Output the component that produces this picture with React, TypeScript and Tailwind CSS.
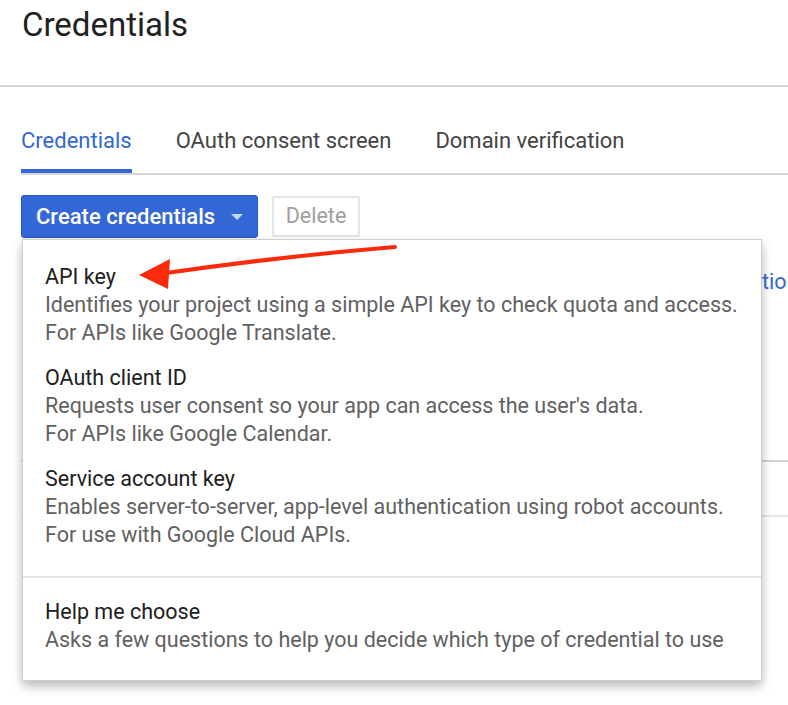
import React from 'react'

interface Option {
  title: string
  lines: string[]
}

const OPTIONS: Option[] = [
  {
    title: 'API key',
    lines: [
      'Identifies your project using a simple API key to check quota and access.',
      'For APIs like Google Translate.',
    ],
  },
  {
    title: 'OAuth client ID',
    lines: [
      "Requests user consent so your app can access the user's data.",
      'For APIs like Google Calendar.',
    ],
  },
  {
    title: 'Service account key',
    lines: [
      'Enables server-to-server, app-level authentication using robot accounts.',
      'For use with Google Cloud APIs.',
    ],
  },
]

const TABS = ['Credentials', 'OAuth consent screen', 'Domain verification']

export default function App() {
  return (
    <div
      className="relative h-[705px] w-[788px] overflow-hidden bg-white"
      style={{ fontFamily: 'Roboto, "Liberation Sans", sans-serif' }}
    >
      {/* page title */}
      <header className="h-[87px] border-b-2 border-[#d6d6d6] px-[22px] pt-[7px]">
        <h1 className="text-[33px] leading-[36px] text-[#212121]">Credentials</h1>
      </header>

      {/* tabs */}
      <nav className="ml-[21px] flex gap-[44px] border-b-2 border-[#d6d6d6] pt-[40px]">
        {TABS.map((t, i) => (
          <div
            key={t}
            className={
              i === 0
                ? 'border-b-4 border-[#3367d6] pb-[14px] text-[22px] leading-[28px] text-[#3367d6]'
                : 'border-b-4 border-transparent pb-[14px] text-[22px] leading-[28px] text-[#444]'
            }
          >
            {t}
          </div>
        ))}
      </nav>

      {/* toolbar + dropdown */}
      <div className="relative ml-[21px] mt-[20px]">
        <div className="flex items-center gap-[14px]">
          <button className="flex h-[43px] w-[237px] items-center gap-[16px] rounded-[3px] border border-[#2a56c6] bg-[#3367d6] pl-[14px] text-[22px] font-medium text-white">
            Create credentials
            <svg width="12" height="6" viewBox="0 0 12 6">
              <path d="M0 0h12L6 6z" fill="#c9d6f3" />
            </svg>
          </button>
          <button className="h-[41px] w-[88px] rounded-[2px] border-2 border-[#e6e6e6] bg-white text-[21.5px] text-[#a0a0a0]">
            Delete
          </button>
        </div>

        {/* page content behind the menu */}
        <div className="mt-[30px] whitespace-nowrap pl-[741px] text-[21.5px] leading-[28px] text-[#3367d6]">
          tio
        </div>
        <div className="h-[166px] border-b-2 border-[#d0d0d0]" />
        <div className="h-[55px] border-b-2 border-[#e8e8e8]" />

        <div className="absolute left-[1px] top-[44px] w-[740px] border border-[#cfcfcf] bg-white pt-[14px] shadow-[0_5px_10px_rgba(0,0,0,0.28)]">
          {OPTIONS.map(o => (
            <div key={o.title} className="px-[22px] py-2">
              <div className="text-[21.5px] leading-[29px] text-[#202020]">{o.title}</div>
              {o.lines.map(l => (
                <div key={l} className="text-[21.5px] leading-[28px] text-[#616161]">
                  {l}
                </div>
              ))}
            </div>
          ))}
          <div className="mt-[19px] h-[2px] bg-[#e3e3e3]" />
          <div className="px-[22px] pb-[26px] pt-[19px]">
            <div className="text-[21.5px] leading-[29px] text-[#202020]">Help me choose</div>
            <div className="text-[21.5px] leading-[28px] text-[#616161]">
              Asks a few questions to help you decide which type of credential to use
            </div>
          </div>
        </div>
      </div>

      {/* annotation arrow */}
      <svg
        className="pointer-events-none absolute left-0 top-0"
        width="788"
        height="705"
        viewBox="0 0 788 705"
      >
        <path
          d="M395 247 Q 285 256 166 273"
          fill="none"
          stroke="#fb2a0a"
          strokeWidth="4"
          strokeLinecap="round"
        />
        <path d="M139 275 L170 259 L168 289 Z" fill="#fb2a0a" />
      </svg>
    </div>
  )
}
